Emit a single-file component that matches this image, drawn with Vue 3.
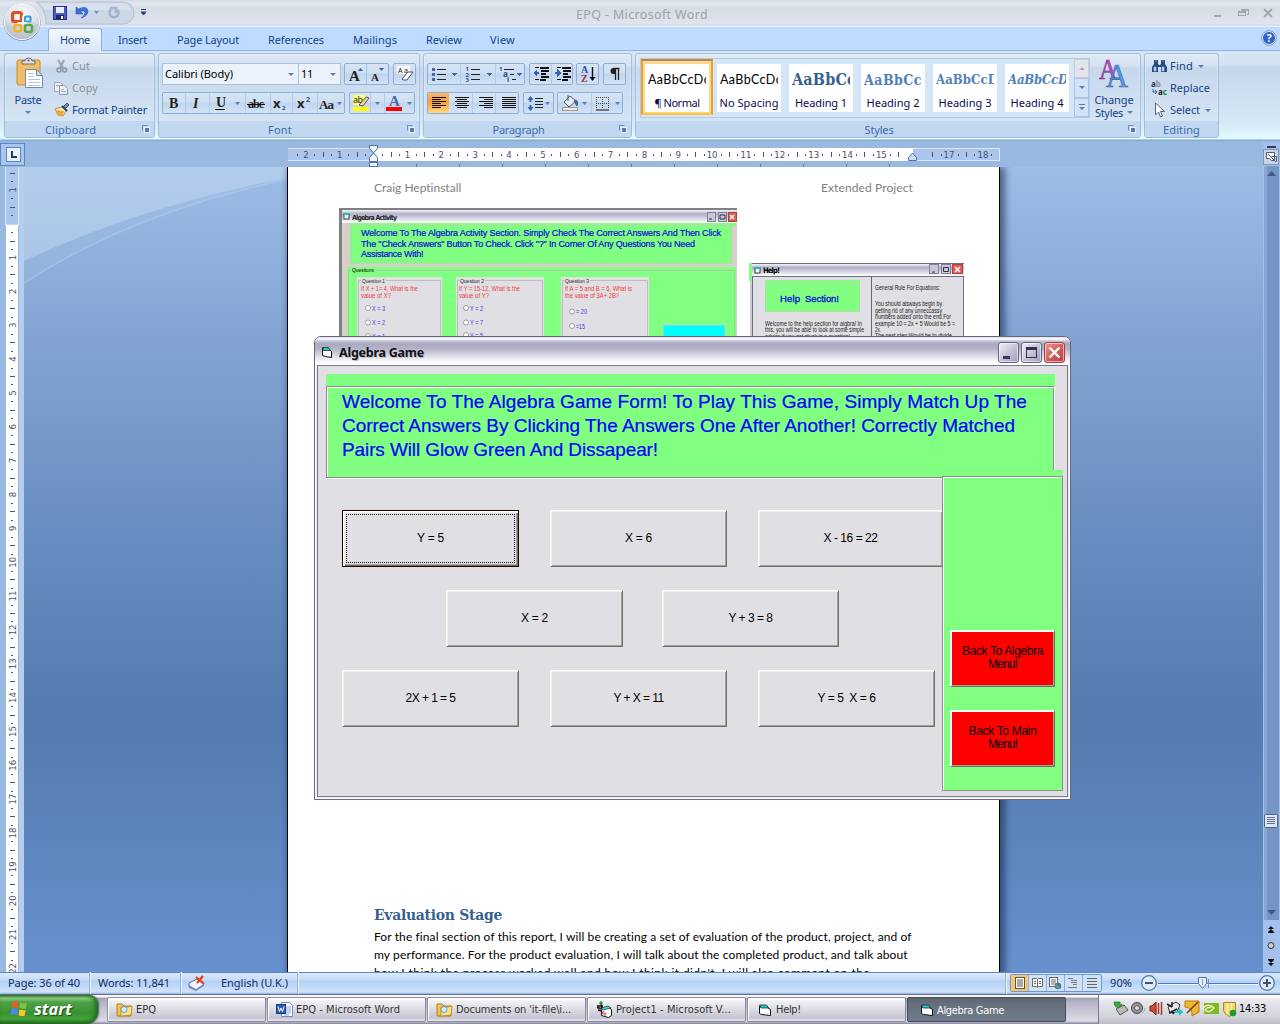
<script setup>
const vFit = {
  mounted(el, { value }) {
    const width = el.getBoundingClientRect().width
    el.style.letterSpacing = (value - width) / el.textContent.length + 'px'
  },
}

const tabs = [
  { label: 'Insert', left: 118, w: 29 },
  { label: 'Page Layout', left: 177, w: 62 },
  { label: 'References', left: 268, w: 56 },
  { label: 'Mailings', left: 353, w: 44 },
  { label: 'Review', left: 426, w: 36 },
  { label: 'View', left: 490, w: 25 },
].map((t, i, all) => ({ ...t, gap: t.left - (i ? all[i - 1].left + all[i - 1].w : 102) }))

const styles = [
  { sample: 'AaBbCcDc', name: '¶ Normal', cls: 'plain', w: 62, nw: 45 },
  { sample: 'AaBbCcDc', name: 'No Spacing', cls: 'plain', w: 62, nw: 59 },
  { sample: 'AaBbCc', name: 'Heading 1', cls: 'h1', w: 64, nw: 52 },
  { sample: 'AaBbCc', name: 'Heading 2', cls: 'h2', w: 58, nw: 53 },
  { sample: 'AaBbCcD', name: 'Heading 3', cls: 'h3', w: 62, nw: 53 },
  { sample: 'AaBbCcD', name: 'Heading 4', cls: 'h4', w: 60, nw: 53 },
]

const step = 33.85
const hTicks = []
for (let q = -9; q <= 73; q++) {
  const x = 85.6 + (q * step) / 4
  if (x < 1 || x > 708 || q === 0 || q === 64 || q === 63 || q === 65) continue
  hTicks.push({ x, q, n: q % 4 === 0 ? Math.abs(q / 4) : null, half: Math.abs(q % 4) === 2 })
}
const vTicks = []
for (let q = -6; q <= 88; q++) {
  if (q === 0) continue
  vTicks.push({ y: 56.7 + (q * step) / 4, q, n: q % 4 === 0 ? Math.abs(q / 4) : null, half: Math.abs(q % 4) === 2 })
}

const rows = [
  [{ t: 'Y = 5', w: 27, focus: true }, { t: 'X = 6', w: 27 }, { t: 'X - 16 = 22', w: 54, wide: true }],
  [{ t: 'X = 2', w: 27 }, { t: 'Y + 3 = 8', w: 44 }],
  [{ t: '2X + 1 = 5', w: 50 }, { t: 'Y + X = 11', w: 50 }, { t: 'Y = 5  X = 6', w: 58 }],
]

const tasks = [
  { t: 'EPQ', w: 20, icon: 'folder' },
  { t: 'EPQ - Microsoft Word', w: 104, icon: 'word' },
  { t: "Documents on 'it-file\\i...", w: 115, icon: 'folder' },
  { t: 'Project1 - Microsoft V...', w: 115, icon: 'project' },
  { t: 'Help!', w: 25, icon: 'form' },
  { t: 'Algebra Game', w: 67, icon: 'form', on: true },
]
</script>

<template>
  <div class="screen">
    <header class="titlebar">
      <svg class="quick" width="160" height="27">
        <path d="M38 2H123a11 11 0 0 1 0 22H46C46 14 43 7 36 2Z" fill="#cbd7e6" stroke="#b3c1d3" />
        <path d="M40 3H122a10 10 0 0 1 9 7H45Z" fill="#dce4ee" opacity=".7" />
        <g shape-rendering="crispEdges">
          <rect x="53.5" y="6.500" width="13" height="13" fill="#4a5bd0" stroke="#2c2f8c" />
          <rect x="56" y="7" width="8" height="6" fill="#e8f0fb" />
          <rect x="56" y="15" width="8" height="4" fill="#1f2a50" /><rect x="61" y="16" width="2" height="3" fill="#fff" />
        </g>
        <path d="M76 7v7h7l-2.500-2.500q4-2 4.500 1 0 3-4 5.500 7-2 7-7-1-6-9.500-2Z" fill="#3e72d8" stroke="#2450b0" stroke-width=".6" />
        <path d="M94 11h5l-2.500 3Z" fill="#6a8dc4" />
        <path d="M111 9.500a4.500 4.500 0 1 0 6 0M110 8h6v5" fill="none" stroke="#a3b3cc" stroke-width="2.500" />
        <path d="M141 9.500h5M141 12h5l-2.500 3Z" fill="#27417a" stroke="#27417a" stroke-width="1" />
      </svg>
      <span class="caption" v-fit="132">EPQ - Microsoft Word</span>
      <svg class="winctl" width="64" height="27" shape-rendering="crispEdges">
        <rect x="0" y="15" width="7" height="2" fill="#a3a7ad" />
        <g fill="none" stroke="#a3a7ad"><path d="M27.500 10V9.500h7v5h-2" /><rect x="24.500" y="11.500" width="7" height="4" /><path d="M25 12.500h7M28 10.500h6" /></g>
        <path d="M50 9l8 8M58 9l-8 8" stroke="#a3a7ad" stroke-width="2" shape-rendering="auto" />
      </svg>
    </header>

    <nav class="tabs">
      <div class="tab-on"><span v-fit="30">Home</span></div>
      <div v-for="t in tabs" :key="t.label" class="tab" :style="{ marginLeft: t.gap + 'px' }"><span v-fit="t.w">{{ t.label }}</span></div>
      <svg class="helpbtn" width="16" height="16"><circle cx="8" cy="8" r="6.500" fill="#2e62cf" stroke="#f4f8ff" /><circle cx="8" cy="8" r="7.300" fill="none" stroke="#5071a6" stroke-width=".6" /><text x="8" y="12" text-anchor="middle" fill="#fff" font-size="11" font-weight="bold" font-family="Noto Sans">?</text></svg>
    </nav>

    <svg class="orb" width="42" height="42">
      <defs>
        <radialGradient id="orbg" cx=".5" cy=".3" r=".75"><stop offset="0" stop-color="#fff" /><stop offset=".55" stop-color="#dde2ea" /><stop offset="1" stop-color="#a9b4c4" /></radialGradient>
      </defs>
      <circle cx="20" cy="20.500" r="18.500" fill="#7c8ba3" />
      <circle cx="20" cy="20" r="17.600" fill="url(#orbg)" stroke="#f5f8fc" stroke-width="1.200" />
      <path d="M3 22q17-6 34 0a17 15 0 0 1-34 0" fill="#b8c4d6" opacity=".45" />
      <g fill="none">
        <rect x="10.500" y="10.500" width="9" height="9" rx="2" stroke="#e0521c" stroke-width="3.200" />
        <rect x="23" y="14.500" width="5.500" height="5" rx="1" stroke="#3d9cdc" stroke-width="2.200" />
        <rect x="12.500" y="23" width="6.500" height="6.500" rx="2" stroke="#f6b21a" stroke-width="2.600" />
        <rect x="23" y="23" width="7" height="7" rx="2" stroke="#5fa843" stroke-width="2.600" />
      </g>
      <path d="M20 13.500h2v9h-2ZM15.500 20h10v2h-10Z" fill="#eceff4" />
    </svg>

    <section class="ribbon">
      <div class="group clip">
        <div class="body">
          <div class="paste">
            <svg width="30" height="33">
              <rect x="2" y="3" width="23" height="25" rx="2" fill="#f1bd62" stroke="#c88a32" />
              <path d="M7 7h13V4h-3q0-3-3.500-3T10 4H7Z" fill="#dfe0e2" stroke="#6d6d70" /><circle cx="13.500" cy="3.500" r="1" fill="#555" />
              <path d="M10.500 12.500h11l6 6v12h-17Z" fill="#fff" stroke="#7088b4" />
              <path d="M21.500 12.500v6h6Z" fill="#cddaf0" stroke="#7088b4" />
              <path d="M13 16.500h6M13 19.500h6M13 22.500h12M13 25.500h12M13 28.500h12" stroke="#b6c4dd" />
            </svg>
            <span class="cmd" v-fit="27">Paste</span>
            <i class="tri"></i>
          </div>
          <div class="list">
            <div class="item off"><svg width="18" height="16"><path d="M4 2l5 8M10 2L6 10" stroke="#9aa3b3" stroke-width="2" fill="none" /><circle cx="5" cy="12" r="2" fill="none" stroke="#8b97ad" stroke-width="1.500" /><circle cx="10.500" cy="12" r="2" fill="none" stroke="#8b97ad" stroke-width="1.500" /></svg><span v-fit="18">Cut</span></div>
            <div class="item off"><svg width="18" height="16"><path d="M.5 2.500h6l3 3v6h-9Z" fill="#eef1f6" stroke="#9ea8b9" /><path d="M5.500 5.500h5l3 3v6h-8Z" fill="#eef1f6" stroke="#8f9aad" /><path d="M2 5.500h3M7 9.500h3M7 11.500h5" stroke="#9ea8b9" /></svg><span v-fit="26">Copy</span></div>
            <div class="item"><svg width="18" height="16"><path d="M9 5l4-4 2 2-4 4Z" fill="#7d8bb5" stroke="#3c4a7c" /><path d="M1 7l7-2 4 4-3 5-5-1Z" fill="#fff1c0" stroke="#b58f3c" /><path d="M2 8l8 1-1 5-5-1Z" fill="#f0a53a" /><path d="M8 4l5 5" stroke="#333f66" stroke-width="2" /></svg><span v-fit="75">Format Painter</span></div>
          </div>
        </div>
        <div class="label"><span v-fit="51">Clipboard</span><i class="launch"></i></div>
      </div>

      <div class="group font">
        <div class="body rows">
          <div class="row">
            <div class="combo c1"><span v-fit="68">Calibri (Body)</span><i class="tri"></i></div>
            <div class="combo c2"><span v-fit="12">11</span><i class="tri"></i></div>
            <div class="btns g3">
              <svg width="43" height="21"><path d="M21.500 0v21" stroke="#a9c3e6" /><text x="4" y="17" font-size="15" font-weight="bold" textLength="12">A</text><path d="M13 7l2.500-3 2.500 3Z" fill="#2c5fa8" /><text x="26" y="17" font-size="11" font-weight="bold" textLength="8">A</text><path d="M34 4h5l-2.500 3Z" fill="#2c5fa8" /></svg>
            </div>
            <div class="btns g4">
              <svg width="21" height="21"><rect x="3" y="2" width="13" height="8" fill="#f8f8f8" /><text x="4" y="9" font-size="7" font-family="Noto Sans" textLength="10">Aa</text><path d="M8 15l6-7h5l-6 8H9Z" fill="#fff" stroke="#4c5668" /></svg>
            </div>
          </div>
          <div class="row">
            <div class="btns">
              <svg width="181" height="21">
                <path d="M22.500 0v21M46.500 0v21M82.500 0v21M107.500 0v21M129.500 0v21M154.500 0v21" stroke="#b4cae8" />
                <g font-weight="bold"><text x="6" y="15" font-size="14" textLength="9">B</text><text x="30" y="15" font-size="14" font-style="italic" textLength="6">I</text><text x="53" y="14" font-size="14" textLength="9">U</text><path d="M52 16.500h10" stroke="#111" /><text x="85" y="15" font-size="12" textLength="16">abc</text><path d="M84 11.500h18" stroke="#111" />
                  <g font-family="Noto Sans"><text x="110" y="15" font-size="13">x</text><text x="119" y="17" font-size="6" class="bl">2</text><text x="134" y="15" font-size="13">x</text><text x="143" y="9" font-size="7" class="bl">2</text></g>
                  <text x="156" y="16" font-size="13" textLength="15">Aa</text></g>
                <path d="M72 9h5l-2.500 3ZM174 9h5l-2.500 3Z" fill="#5b7fb5" />
              </svg>
            </div>
            <div class="btns g4">
              <svg width="64" height="21"><path d="M20.500 0v21M34.500 0v21" stroke="#b4cae8" /><rect x="3" y="2" width="12" height="10" fill="#ffff80" /><text x="3" y="10" font-size="9" font-family="Noto Sans" textLength="10">ab</text><path d="M9 12l7-8 3 1-6 8Z" fill="#e9dfa0" stroke="#555" /><rect x="3" y="14" width="16" height="4" fill="#ff0" /><text x="39" y="13" font-size="15" font-weight="bold" class="slate" textLength="11">A</text><rect x="36" y="14" width="16" height="4" fill="#f00" /><path d="M25 9h5l-2.500 3ZM57 9h5l-2.500 3Z" fill="#5b7fb5" /></svg>
            </div>
          </div>
        </div>
        <div class="label"><span v-fit="24">Font</span><i class="launch"></i></div>
      </div>

      <div class="group para">
        <div class="body rows">
          <div class="row">
            <div class="btns">
              <svg width="96" height="21" shape-rendering="crispEdges"><path d="M32.500 0v21M67.500 0v21" stroke="#b4cae8" />
                <path d="M9 5.500h9M9 10.500h9M9 15.500h9M43 5.500h9M43 10.500h9M43 15.500h9M76 5.500h10M82 10.500h4M84 15.500h4" stroke="#222" />
                <g fill="#3d66ad"><rect x="4" y="4" width="3" height="3" /><rect x="4" y="9" width="3" height="3" /><rect x="4" y="14" width="3" height="3" /><path d="M24 9h5l-2.500 3ZM59 9h5l-2.500 3ZM89 9h5l-2.500 3Z" /></g>
                <g font-size="6" font-family="Noto Sans" font-weight="bold"><text x="37.500" y="7" class="bl">1</text><text x="37.500" y="12.500" class="bl">2</text><text x="37.500" y="18" class="bl">3</text><text x="71" y="7" class="bl">1</text><text x="75" y="13" font-size="8" class="bl">a</text><text x="79" y="18" font-size="7" class="bl">i</text></g></svg>
            </div>
            <div class="btns g4"><svg width="42" height="21" shape-rendering="crispEdges"><path d="M21.500 0v21" stroke="#b4cae8" /><path d="M10 3.500h9M11 6.500h8M11 9.500h5M11 12.500h8M10 15.500h6M32 3.500h9M33 6.500h8M33 9.500h5M33 12.500h8M32 15.500h6" stroke="#111" stroke-width="2" /><path d="M5 3.500h4M5 15.500h4M27 3.500h4M27 15.500h4" stroke="#111" /><path d="M3 9l4-4v8ZM31 9l-4-4v8Z" fill="#3465b5" /><path d="M5 9h4M25 9h3" stroke="#3465b5" stroke-width="2" /></svg></div>
            <div class="btns g4"><svg width="21" height="21"><text x="4" y="9" font-size="10" font-weight="bold" class="bl" textLength="6">A</text><text x="4" y="18" font-size="10" font-weight="bold" class="rd" textLength="6">Z</text><path d="M15.500 3v11" stroke="#111" stroke-width="1.400" /><path d="M12.500 13h6l-3 4Z" fill="#111" /></svg></div>
            <div class="btns g4"><svg width="21" height="21"><path d="M15.500 4.500H9.500M11.500 4v12M14.500 4v12" fill="none" stroke="#222" stroke-width="1.300" /><path d="M12 4H9.500a3 3 0 0 0 0 6H12Z" fill="#222" /></svg></div>
          </div>
          <div class="row">
            <div class="btns"><svg width="90" height="21" shape-rendering="crispEdges"><defs><linearGradient id="og" x2="0" y2="1"><stop offset="0" stop-color="#f9b667" /><stop offset=".45" stop-color="#f99e3c" /><stop offset="1" stop-color="#ffe08a" /></linearGradient></defs><rect width="21" height="21" fill="url(#og)" /><path d="M44.500 0v21M67.500 0v21" stroke="#b4cae8" />
              <path d="M4 4.500h14M4 6.500h9M4 8.500h14M4 10.500h9M4 12.500h14M4 14.500h9M27 4.500h14M29 6.500h10M27 8.500h14M29 10.500h10M27 12.500h14M29 14.500h10M51 4.500h14M56 6.500h9M51 8.500h14M56 10.500h9M51 12.500h14M56 14.500h9M74 4.500h14M74 6.500h14M74 8.500h14M74 10.500h14M74 12.500h14M74 14.500h14" stroke="#111" /></svg></div>
            <div class="btns g4"><svg width="29" height="21"><path d="M6.500 4v5M6.500 12v5" stroke="#3465b5" stroke-width="2" /><path d="M3.500 7l3-4 3 4ZM3.500 14h6l-3 4Z" fill="#3465b5" /><path d="M11 5.500h8M11 8.500h8M11 11.500h8M11 14.500h8" stroke="#222" /><path d="M21 9h5l-2.500 3Z" fill="#5b7fb5" /></svg></div>
            <div class="btns g4"><svg width="64" height="21"><path d="M33.500 0v21" stroke="#b4cae8" /><path d="M6 9l6-6 6 5-7 6Z" fill="#e9eef5" stroke="#4a5d80" /><path d="M10 2v6M18 7q3 2 1 6l-3-5Z" stroke="#3d5c96" fill="#3d6bb0" /><rect x="4.500" y="14.500" width="15" height="3" fill="#f3ead8" stroke="#999" /><path d="M24 9h5l-2.500 3ZM57 9h5l-2.500 3Z" fill="#5b7fb5" /><g stroke="#444" stroke-dasharray="1 1"><path d="M38 4.500h13M38 10.500h13M38.500 4v12M44.500 4v12M50.500 4v12" /></g><path d="M38 17h13" stroke="#111" /></svg></div>
          </div>
        </div>
        <div class="label"><span v-fit="52">Paragraph</span><i class="launch"></i></div>
      </div>

      <div class="group styles">
        <div class="body">
          <div class="gallery">
            <div v-for="(s, i) in styles" :key="i" class="cell" :class="{ sel: i === 0 }">
              <div class="card"><div class="sample" :class="s.cls"><span v-fit="s.w">{{ s.sample }}</span></div><div class="sname"><span v-fit="s.nw">{{ s.name }}</span></div></div>
            </div>
            <div class="gscroll"><div class="gs dis"><b class="up"></b></div><div class="gs"><i class="tri"></i></div><div class="gs more"><i class="tri"></i></div></div>
          </div>
          <div class="change">
            <svg width="34" height="32"><g font-family="Liberation Serif"><text x="2" y="22" font-size="30" fill="#b84fc0" stroke="#7c2a86" stroke-width=".6" textLength="18" lengthAdjust="spacingAndGlyphs">A</text><text x="9" y="30" font-size="34" fill="#5d95e0" stroke="#2f62ae" stroke-width=".6" textLength="22" lengthAdjust="spacingAndGlyphs">A</text></g></svg>
            <span class="cmd" v-fit="39">Change</span>
            <span class="cmd2"><span v-fit="28">Styles</span><i class="tri"></i></span>
          </div>
        </div>
        <div class="label"><span v-fit="29">Styles</span><i class="launch"></i></div>
      </div>

      <div class="group editing">
        <div class="body">
          <div class="list">
            <div class="item"><svg width="19" height="16"><path d="M3 2h4v4l1 1h1l1-1V2h4v4l2 3v5h-6V9H7v5H1V9l2-3Z" fill="#2a4a86" /><path d="M3 9h2v4H3ZM11 9h2v4h-2ZM4 3h2M11 3h2" fill="#b9cdf0" stroke="#b9cdf0" stroke-width=".5" /></svg><span v-fit="23">Find</span><i class="tri"></i></div>
            <div class="item"><svg width="19" height="16"><g font-family="Noto Sans" font-size="8" font-weight="bold"><text x="0" y="6.500" fill="#333">a<tspan fill="#8a94a4">b</tspan></text><text x="7" y="14.500" fill="#222">a<tspan fill="#1a8a1a">c</tspan></text></g><path d="M2 9v3h4M4 10l2 2-2 2" stroke="#2c5fa8" fill="none" /></svg><span v-fit="40">Replace</span></div>
            <div class="item"><svg width="19" height="16"><path d="M4.500 1v12l3-3 2 5 2-1-2-4.500h4Z" fill="#fff" stroke="#56657f" /></svg><span v-fit="30">Select</span><i class="tri"></i></div>
          </div>
        </div>
        <div class="label"><span v-fit="37">Editing</span></div>
      </div>
    </section>

    <main class="work">
      <aside class="left">
        <div class="tabsel"><svg width="15" height="15"><rect x=".5" y=".5" width="14" height="14" fill="#e9f1fb" stroke="#5c86cc" /><path d="M6 4v6h5" fill="none" stroke="#203c66" stroke-width="2" /></svg></div>
        <svg class="vruler" width="24" height="805">
          <rect width="24" height="805" fill="#9ab9e1" /><rect x="19" width="5" height="805" fill="#b7cdee" />
          <rect x="5" y="0" width="14" height="58" fill="#abc6ec" /><rect x="5.500" y="-1" width="13" height="59" fill="none" stroke="#dce8f7" /><rect x="6" y="58" width="12" height="747" fill="#fff" />
          <template v-for="k in vTicks" :key="k.q">
            <text v-if="k.n" class="rn" :transform="`translate(16 ${k.y}) rotate(-90)`" text-anchor="middle">{{ k.n }}</text>
            <rect v-else-if="k.half" x="10" :y="Math.round(k.y)" width="5" height="1" fill="#4c5566" />
            <rect v-else x="11" :y="Math.round(k.y)" width="2" height="1" fill="#4c5566" />
          </template>
        </svg>
      </aside>

      <div class="center">
        <svg class="hruler" width="713" height="25">
          <rect x="0" y="6" width="712" height="13" fill="#dce8f7" /><rect x="0" y="7" width="711" height="11" fill="#abc6ec" /><rect x="86" y="6" width="539" height="13" fill="#fff" />
          <template v-for="k in hTicks" :key="k.q">
            <text v-if="k.n" class="rn" :x="k.x" y="16" text-anchor="middle">{{ k.n }}</text>
            <rect v-else-if="k.half" :x="Math.round(k.x)" y="10" width="1" height="5" fill="#4c5566" />
            <rect v-else :x="Math.round(k.x)" y="12" width="1" height="2" fill="#4c5566" />
          </template>
          <rect v-for="n in 12" :key="n" :x="85 + n * 43" y="22" width="1" height="3" fill="#6f7a8a" />
          <g fill="#f2f7fd" stroke="#4d73b4"><path d="M81.500 3.500h8v3l-4 4.500-4-4.500ZM81.500 19.500v-4l4-4.500 4 4.500v4Z" /><rect x="81.500" y="20.500" width="8" height="4" /><path d="M620.500 18.500v-3l4-4.500 4 4.500v3Z" fill="#c9dcf4" /></g>
        </svg>
        <div class="desk">
          <svg class="swoosh" width="264" height="130">
            <path d="M0 0H264V11Q120 38 0 94Z" fill="#cfe1f5" opacity=".45" />
            <path d="M0 116Q110 45 264 12" fill="none" stroke="#b6cff0" stroke-width="1.500" opacity=".5" />
            <path d="M0 94Q120 38 264 11Q110 45 0 116Z" fill="#cfe1f5" opacity=".1" />
          </svg>
          <article class="page">
            <div class="phead"><span v-fit="87.500">Craig Heptinstall</span><span v-fit="92">Extended Project</span></div>
            <div class="shots">
              <svg class="s1" width="399" height="140" viewBox="339 208 399 140">
                <defs><linearGradient id="tb" x2="0" y2="1"><stop offset="0" stop-color="#f4f4f8" /><stop offset=".3" stop-color="#b0b0c8" /><stop offset="1" stop-color="#fff" /></linearGradient></defs>
                <rect x="339" y="208" width="398" height="140" fill="#808080" /><rect x="342" y="210" width="395" height="13" fill="url(#tb)" /><rect x="342" y="223" width="395" height="125" fill="#d6d0c8" />
                <rect x="344" y="214" width="5" height="5" fill="#fff" stroke="#333" /><rect x="344" y="213" width="5" height="2" fill="#0cc" />
                <text x="352" y="220" font-size="7" font-weight="bold" class="nar" textLength="45" fill="#222">Algebra Activity</text>
                <g><rect x="707.500" y="212.500" width="8" height="9" fill="#c8c8da" stroke="#8080a0" /><rect x="718.500" y="212.500" width="8" height="9" fill="#c8c8da" stroke="#8080a0" /><rect x="728.500" y="212.500" width="8" height="9" fill="#d9605c" stroke="#b04040" /><path d="M709 219h3M720 215h5v4h-5Z" stroke="#333" fill="none" /><path d="M730 215l4 4m0-4l-4 4" stroke="#fff" stroke-width="1.300" /></g>
                <rect x="350" y="223" width="386" height="41" fill="#80ff80" /><rect x="732" y="226" width="4" height="38" fill="#d6d0c8" /><rect x="351.500" y="225.500" width="380" height="37" fill="none" stroke="#b4d8ac" />
                <g class="blue" font-size="9" stroke="#0a0ad8" stroke-width=".2"><text x="361" y="235.500" textLength="360">Welcome To The Algebra Activity Section. Simply Check The Correct Answers And Then Click</text><text x="361" y="246.500" textLength="334">The "Check Answers" Button To Check. Click "?" In Corner Of Any Questions You Need</text><text x="361" y="257.300" textLength="62.500">Assistance With!</text></g>
                <rect x="347" y="267" width="389" height="81" fill="#80ff80" /><path d="M348.500 348V270.500H351M376 270.500H734.500V348" fill="none" stroke="#a8c8a0" />
                <text x="352" y="272" font-size="5.800" textLength="22" lengthAdjust="spacingAndGlyphs">Questions</text>
                <g fill="#e0dfe3"><rect x="357" y="277" width="85" height="70" /><rect x="456" y="277" width="88" height="70" /><rect x="561" y="277" width="88" height="70" /></g>
                <g fill="none" stroke="#bdbdc4"><path d="M358.500 347V280.500H361M386 280.500H440.500V347M457.500 347V280.500H460M485 280.500H542.500V347M562.500 347V280.500H565M590 280.500H647.500V347" /></g>
                <g font-size="5.800" fill="#222"><text x="362" y="283" textLength="23" lengthAdjust="spacingAndGlyphs">Question 1</text><text x="460" y="283" textLength="24" lengthAdjust="spacingAndGlyphs">Question 2</text><text x="565" y="283" textLength="24" lengthAdjust="spacingAndGlyphs">Question 3</text></g>
                <g font-size="6.300" class="red"><text x="361" y="291" textLength="57" lengthAdjust="spacingAndGlyphs">If X + 1= 4, What is the</text><text x="361" y="298" textLength="30" lengthAdjust="spacingAndGlyphs">value of X?</text><text x="459" y="291" textLength="61" lengthAdjust="spacingAndGlyphs">If Y = 15-12, What is the</text><text x="459" y="298" textLength="30" lengthAdjust="spacingAndGlyphs">value of Y?</text><text x="565" y="291" textLength="67" lengthAdjust="spacingAndGlyphs">If A = 5  and B = 6, What is</text><text x="565" y="298" textLength="54" lengthAdjust="spacingAndGlyphs">the value of 3A+ 2B?</text></g>
                <g font-size="6.300" class="blue2"><text x="372" y="310.500" textLength="13" lengthAdjust="spacingAndGlyphs">X = 3</text><text x="372" y="325" textLength="13" lengthAdjust="spacingAndGlyphs">X = 2</text><text x="372" y="339" textLength="13" lengthAdjust="spacingAndGlyphs">X = 1</text><text x="470" y="310.500" textLength="13" lengthAdjust="spacingAndGlyphs">Y = 2</text><text x="470" y="325" textLength="13" lengthAdjust="spacingAndGlyphs">Y = 7</text><text x="470" y="337.500" textLength="13" lengthAdjust="spacingAndGlyphs">Y = 5</text><text x="576" y="314" textLength="11" lengthAdjust="spacingAndGlyphs">= 20</text><text x="576" y="328.500" textLength="9" lengthAdjust="spacingAndGlyphs">=15</text></g>
                <g fill="#fff" stroke="#888" stroke-width=".8"><circle cx="368" cy="308" r="2.500" /><circle cx="368" cy="322.500" r="2.500" /><circle cx="368" cy="336" r="2.500" /><circle cx="466" cy="308" r="2.500" /><circle cx="466" cy="322.500" r="2.500" /><circle cx="466" cy="335" r="2.500" /><circle cx="572" cy="311.500" r="2.500" /><circle cx="572" cy="326" r="2.500" /></g>
                <rect x="663" y="325" width="62" height="20" fill="#0ff" stroke="#bcd" />
              </svg>
              <svg class="s2" width="216" height="85" viewBox="749 263 216 85">
                <rect x="749" y="263" width="3" height="18" fill="#80ff80" /><rect x="750" y="281" width="2" height="67" fill="#ccc" />
                <rect x="752" y="263" width="212" height="85" fill="#6e6e86" /><rect x="752" y="264" width="212" height="12" fill="url(#tb)" /><rect x="753" y="277" width="210" height="71" fill="#e0dfe3" />
                <rect x="755" y="268" width="5" height="5" fill="#fff" stroke="#333" /><rect x="755" y="267" width="5" height="2" fill="#0cc" />
                <text x="763" y="273" font-size="7.500" font-weight="bold" class="nar" textLength="17">Help!</text>
                <rect x="929.500" y="264.500" width="9" height="9" fill="#c8c8da" stroke="#8080a0" /><rect x="941.500" y="264.500" width="9" height="9" fill="#c8c8da" stroke="#8080a0" /><rect x="952.500" y="264.500" width="10" height="9" fill="#d9605c" stroke="#b04040" /><path d="M932 272h3M943.500 267.500h5v4h-5Z" stroke="#333" fill="none" /><path d="M955 267l5 5m0-5l-5 5" stroke="#fff" stroke-width="1.300" />
                <rect x="765" y="280" width="95" height="32" fill="#80ff80" /><rect x="765.500" y="283.500" width="94" height="28" fill="none" stroke="#b4d8ac" />
                <g font-size="9.500" class="blue" stroke="#0a0ad8" stroke-width=".3"><text x="780" y="301.500" textLength="20">Help</text><text x="805" y="301.500" textLength="34">Section!</text></g>
                <path d="M871.500 276v72" stroke="#666" />
                <g font-size="6.300" fill="#222"><text x="765" y="325.500" textLength="97" lengthAdjust="spacingAndGlyphs">Welcome to the help section for algbra! In</text><text x="765" y="332" textLength="99" lengthAdjust="spacingAndGlyphs">this, you will be able to look at some simple</text><text x="765" y="338.500" textLength="85" lengthAdjust="spacingAndGlyphs">advice if you get stuck in a question!</text>
                  <text x="875" y="290" textLength="65" lengthAdjust="spacingAndGlyphs">General Rule For Equations:</text><text x="875" y="306" textLength="67" lengthAdjust="spacingAndGlyphs">You should alsways begin by</text><text x="875" y="312.500" textLength="67" lengthAdjust="spacingAndGlyphs">getting rid of any unneccassy</text><text x="875" y="319" textLength="76" lengthAdjust="spacingAndGlyphs">numbers added onto the end.For</text><text x="875" y="325.500" textLength="80" lengthAdjust="spacingAndGlyphs">example 10 = 2x + 5 Would be 5 =</text><text x="875" y="332" textLength="6" lengthAdjust="spacingAndGlyphs">2x.</text><text x="875" y="338" textLength="77" lengthAdjust="spacingAndGlyphs">The next step Would be to divide</text></g>
              </svg>
            </div>
            <h2><span v-fit="128">Evaluation Stage</span></h2>
            <p><span v-fit="538">For the final section of this report, I will be creating a set of evaluation of the product, project, and of</span></p>
            <p><span v-fit="534">my performance. For the product evaluation, I will talk about the completed product, and talk about</span></p>
            <p><span v-fit="496">how I think the process worked well and how I think it didn't. I will also comment on the</span></p>
          </article>
        </div>
      </div>

      <aside class="right">
        <svg width="17" height="830">
          <rect width="17" height="830" fill="#a3c1ec" /><rect x="1" y="24" width="15" height="754" fill="#7596c4" /><rect x="1" y="24" width="3" height="754" fill="#88a6d0" />
          <rect x="4" y="4" width="9" height="2" fill="#2f3f5e" />
          <rect x=".5" y="7.500" width="15" height="15" fill="#c9d3e2" stroke="#8296b4" /><path d="M3.500 10.500h8v8h-3l-2-2h-3Z" fill="#fff" stroke="#4a5d80" /><path d="M5 12l8 8M8.500 14.500h5v5" stroke="#4a5d80" fill="none" />
          <path d="M4 34h9l-4.500-5Z" fill="#3f5886" /><path d="M4 768h9l-4.500 5Z" fill="#3f5886" />
          <rect x="1.500" y="672.500" width="13" height="13" rx="1" fill="#dfe7f2" stroke="#4d6694" /><path d="M4 675.500h8M4 677.500h8M4 679.500h8M4 681.500h8" stroke="#5f7296" />
          <g fill="#111"><path d="M5 787h6l-3-3ZM5 790h6l-3-3Z" /><rect x="5" y="790" width="6" height="1" /><path d="M5 818h6l-3 3ZM5 821h6l-3 3Z" /><rect x="5" y="817" width="6" height="1" /></g><circle cx="8" cy="803.500" r="3" fill="#ccc" stroke="#333" />
        </svg>
      </aside>
    </main>

    <footer class="status">
      <div class="st s-page"><span v-fit="72">Page: 36 of 40</span></div>
      <div class="st s-words"><span v-fit="72">Words: 11,841</span></div>
      <div class="st s-lang">
        <svg width="18" height="18"><path d="M1 9l8-4 7 5-8 6-7-3Z" fill="#f3f6fb" stroke="#5f7396" /><path d="M1 11l7 4 8-5v2l-8 5-7-3Z" fill="#7590c0" /><path d="M8 3l8 7M15 2L9 9" stroke="#e23b1e" stroke-width="2.200" /></svg>
        <span v-fit="67">English (U.K.)</span>
      </div>
      <svg class="stright" width="276" height="22">
        <path d="M1.500 1v21" stroke="#8eb4e6" /><path d="M2.500 1v21" stroke="#f0f6fe" />
        <rect x="6.500" y="2.500" width="91" height="17" rx="1" fill="#cfe1f7" stroke="#6f95cc" /><rect x="7" y="3" width="17" height="16" fill="#fbc66a" />
        <path d="M24.500 3v16M42.500 3v16M60.500 3v16M78.500 3v16" stroke="#8fb0dd" />
        <rect x="11.500" y="5.500" width="9" height="11" fill="#fff" stroke="#555" /><path d="M13 8h6M13 10h6M13 12h6M13 14h6" stroke="#555" />
        <path d="M28.500 6.500h4l1 1 1-1h4v8h-4l-1 1-1-1h-4ZM33.500 7v8M30 9.500h2M30 11.500h2M35 9.500h2M35 11.500h2" fill="#fff" stroke="#666" />
        <rect x="45.500" y="5.500" width="8" height="9" fill="#fff" stroke="#666" /><path d="M47 8h5M47 10h5M47 12h5" stroke="#666" /><circle cx="54" cy="14" r="3.300" fill="#4577b8" /><path d="M52 13l3 3" stroke="#5dab4e" stroke-width="2" />
        <path d="M64 6.500h5M67 8.500h6M67 10.500h6M69 12.500h4M64 15.500h9" stroke="#777" /><path d="M83 6.500h10M83 9.500h10M83 12.500h10M83 15.500h10" stroke="#666" />
        <text x="106" y="15" font-size="11" textLength="22" class="pct">90%</text>
        <path d="M154 11.500h100" stroke="#4f77b5" /><path d="M154 12.500h100" stroke="#f3f8ff" /><path d="M204.500 7v9" stroke="#6f8fc0" />
        <g fill="#dfebf9" stroke="#5576a8" stroke-width="1.300"><circle cx="145" cy="11" r="7.300" /><circle cx="263" cy="11" r="7.300" /></g><path d="M141 11h8M259 11h8M263 7v8" stroke="#41526f" stroke-width="2" />
        <path d="M194.500 5.500h8v6l-4 5-4-5Z" fill="#e7f0fb" stroke="#55749f" /><path d="M198.500 7v6" stroke="#7a9bcb" />
      </svg>
    </footer>

    <footer class="taskbar">
      <div class="start">
        <svg width="20" height="19"><g transform="rotate(4 10 9)"><path d="M2 4q3-2 6-.5V9Q5 8 1.500 9Z" fill="#ef5a2a" /><path d="M9.500 3.500q3 1.500 7-.5L16 9q-4 1-6.500 0Z" fill="#7dc242" /><path d="M1.500 10.500Q5 9 8 10.500L7.500 16Q5 15 1 16.500Z" fill="#4a8af0" /><path d="M9.500 10.500q3 1 6.500 0L15 16.500q-3 1-6-.5Z" fill="#fbc62a" /></g></svg>
        <span v-fit="38">start</span>
      </div>
      <div v-for="k in tasks" :key="k.t" class="task" :class="{ on: k.on }">
        <svg width="17" height="17">
          <g v-if="k.icon === 'folder'"><path d="M1 3h5l2 2h7v10H1Z" fill="#f6c445" stroke="#b27d12" /><path d="M5 6h7l4-1-1 9-10 1Z" fill="#ffe28a" stroke="#b27d12" stroke-width=".7" /><circle cx="8" cy="8.500" r="3" fill="#d5ecfb" stroke="#5aa0d0" /></g>
          <g v-else-if="k.icon === 'word'"><path d="M5.500 1.500h8l3 3v11h-11Z" fill="#fff" stroke="#6d8bc4" /><path d="M10 6h5M10 8h5M8 10h7M8 12h7M8 14h5" stroke="#87a4d8" /><rect x=".5" y="3.500" width="9" height="9" fill="#2d5db5" stroke="#173c87" /><path d="M2 5.500l1.500 5L5 7l1.500 3.500 1.500-5" fill="none" stroke="#fff" /></g>
          <g v-else-if="k.icon === 'project'"><path d="M5.500 8.500l6-3 4 3v6l-3 2-7-2Z" fill="#fff" stroke="#111" /><path d="M5 7l7-2 3 2-8 2Z" fill="#3dd" stroke="#111" stroke-width=".6" /><path d="M1 5h6M2 9l4 1M5 2l1 5M1 6.500l4 1" stroke="#111" stroke-width="1.500" /><circle cx="5" cy="2" r="1.700" fill="#2a9a3a" /><path d="M7 10v3M9 11.500v3" stroke="#e22" stroke-width="1.300" /></g>
          <g v-else><path d="M3.500 5.500l8 1 3 2v6l-9-1-2-1Z" fill="#fff" stroke="#111" /><path d="M3.500 4h7l2 3H5Z" fill="#2cc" stroke="#111" stroke-width=".7" /></g>
        </svg>
        <span v-fit="k.w">{{ k.t }}</span>
      </div>
      <div class="tray">
        <svg width="128" height="20">
          <path d="M2 3h6v3l2-1-2 5-5-3Z" fill="#3cae3c" stroke="#1a701a" stroke-width=".7" /><path d="M4 10l8-4 4 5-8 5Z" fill="#b9bdb5" stroke="#555" />
          <circle cx="25" cy="9" r="5.500" fill="#999" stroke="#444" /><circle cx="25" cy="9" r="2.500" fill="#ddd" stroke="#555" /><path d="M30 14q3-1 3-5" stroke="#9aa2dd" fill="none" />
          <path d="M38 7h2l4-4v13l-4-4h-2Z" fill="#d9482c" stroke="#7a1d10" /><path d="M46.500 4v11M49.500 3v13" stroke="#a63a28" stroke-width="1.500" />
          <path d="M56 8l8-5 4 3-3 7-7 1Z" fill="#e9e9e9" stroke="#333" /><path d="M55 5l5 3M60 3v5M57 14l8-4M59 12l3 3" stroke="#222" stroke-width="1.500" /><path d="M63 12h4v-3l4 4-4 4v-3h-4Z" fill="#1cc" />
          <path d="M73 2h14v11l-7 4q1-8-7-9Z" fill="#f3b52c" stroke="#b27a12" /><path d="M75 14L86 3" stroke="#5a4318" stroke-width="1.500" />
          <rect x="92" y="4" width="15" height="11" fill="#80b81e" /><path d="M90 10q6-7 12-1-5 6-9 2 3-4 6-2" fill="none" stroke="#e6f5c4" stroke-width="1.300" />
          <path d="M111.500 3.500h12v8q-1 4-6 6-5-2-6-6Z" fill="#f5d564" stroke="#a98a26" /><path d="M115.500 4v11M119.500 4v11" stroke="#fff6c8" stroke-width="1.500" /><circle cx="121" cy="14" r="3.300" fill="#1f9a2c" />
        </svg>
        <span v-fit="27">14:33</span>
      </div>
    </footer>

    <div class="window">
      <div class="wtitle">
        <svg width="14" height="14"><path d="M1.500 2.500l7 1 2 2v6l-6-1-3-1Z" fill="#fff" stroke="#111" /><path d="M1.500 1.500h6l2 3h-7Z" fill="#2cc" stroke="#111" stroke-width=".7" /></svg>
        <span class="wt" v-fit="85">Algebra Game</span>
        <div class="wb"><svg width="19" height="19"><path d="M4 14.500h7" stroke="#3a3a5c" stroke-width="3" /></svg></div>
        <div class="wb"><svg width="19" height="19" shape-rendering="crispEdges"><path d="M4.500 4.500h10v10h-10Z" fill="none" stroke="#33334f" /><path d="M4 5h11v2H4Z" fill="#33334f" /></svg></div>
        <div class="wb close"><svg width="19" height="19"><path d="M4.500 4.500l10 10M14.500 4.500l-10 10" stroke="#fff" stroke-width="2.400" /></svg></div>
      </div>
      <div class="client">
        <div class="main">
          <div class="banner"><div class="frame">
            <span v-fit="685">Welcome To The Algebra Game Form! To Play This Game, Simply Match Up The</span>
            <span v-fit="673">Correct Answers By Clicking The Answers One After Another! Correctly Matched</span>
            <span v-fit="316">Pairs Will Glow Green And Dissapear!</span>
          </div></div>
          <div v-for="(r, i) in rows" :key="i" class="brow" :class="'r' + i">
            <button v-for="b in r" :key="b.t" class="vb" :class="{ focus: b.focus, wide: b.wide }"><span v-fit="b.w">{{ b.t }}</span></button>
          </div>
        </div>
        <div class="side"><div class="sideframe">
          <button class="vb redb"><span v-fit="81">Back To Algebra</span><span v-fit="29">Menu!</span></button>
          <button class="vb redb"><span v-fit="68">Back To Main</span><span v-fit="29">Menu!</span></button>
        </div></div>
      </div>
    </div>
  </div>
</template>

<style>
html, body { margin: 0; overflow: hidden; }
</style>
<style scoped>
* { box-sizing: border-box; }
.screen { position: relative; width: 1280px; height: 1024px; overflow: hidden; display: flex; flex-direction: column; font: 11px/14px "Noto Sans", "Open Sans", sans-serif; color: #15428b; }
span { display: inline-block; white-space: pre; }
svg { display: block; flex: none; }
.titlebar { height: 27px; flex: none; display: flex; background: linear-gradient(#d3d9e1, #e3e8ee 3px, #d6dde7 9px, #dfe5ed 24px, #cdd5df 25px, #e8edf4 26px); }
.caption { margin: 6px 0 0 416px; font-size: 12.500px; line-height: 17px; height: 17px; color: #9fa1a4; }
.winctl { margin-left: 506px; }
.tabs { height: 24px; flex: none; display: flex; background: #bfdbff; border-bottom: 1px solid #8db2e3; line-height: 25px; }
.tab-on { margin: 1px 0 -1px 48px; width: 54px; height: 23px; background: linear-gradient(#f3f8fe, #dbe8f8); border: 1px solid #8db2e3; border-bottom: 0; border-radius: 3px 3px 0 0; padding-left: 11px; line-height: 22px; }
.helpbtn { margin: 3px 3px 0 auto; }
.orb { position: absolute; left: 2px; top: 2px; }
.ribbon { height: 91px; flex: none; display: flex; padding: 2px 0 0 4px; gap: 3px; background: linear-gradient(#dbe6f4, #d3e1f2 14px, #c6d7ec 16px, #d5e6f6 70px, #e3fbff 88px, #7fa6cd 89px, #9dbde0 91px); }
.group { height: 85px; display: flex; flex-direction: column; border: 1px solid #9fbddd; border-radius: 3px; background: linear-gradient(#dfe9f5, #d4e1f1 12px, #c7d8ed 14px, #d9e8f6); box-shadow: inset 0 0 0 1px rgba(255,255,255,.25); overflow: hidden; flex: none; }
.body { flex: 1; display: flex; min-height: 0; }
.label { height: 16px; flex: none; background: #c1d8f0; color: #3e6aaa; display: flex; justify-content: center; line-height: 17px; padding-right: 18px; position: relative; }
.launch { position: absolute; right: 6px; top: 4px; width: 6px; height: 6px; border: 1px solid #6d8fbf; border-right-color: transparent; border-bottom-color: transparent; }
.launch::after { content: ""; position: absolute; left: 2px; top: 2px; width: 4px; height: 4px; background: #587aaf; outline: 1px solid #e8f0fa; }
.clip { width: 151px; }
.font { width: 262px; }
.para { width: 209px; }
.styles { width: 506px; }
.editing { width: 75px; }
.editing .label { padding-right: 0; }
.tri { display: inline-block; width: 0; height: 0; border: 3px solid transparent; border-top-color: #5b7fb5; border-bottom: 0; }
.paste { width: 46px; display: flex; flex-direction: column; align-items: center; padding-top: 3px; }
.paste svg { margin-left: 4px; }
.cmd { margin-top: 3px; line-height: 13px; height: 13px; }
.paste .tri { margin-top: 5px; }
.list { display: flex; flex-direction: column; padding: 1px 0 0 2px; }
.list .item { height: 22px; display: flex; align-items: center; }
.list .tri { margin-left: 5px; }
.clip .list { padding-left: 3px; }
.off { color: #8d8f94; }
.editing .list { padding-left: 6px; }
.rows { flex-direction: column; padding: 9px 0 0 3px; gap: 7px; }
.row { display: flex; height: 22px; }
.combo { height: 22px; border: 1px solid #abc1de; background: #eaf2fb; color: #000; display: flex; align-items: center; padding: 0 4px 0 2px; justify-content: space-between; }
.c1 { width: 137px; }
.c2 { width: 42px; border-left: 0; padding-left: 2px; }
.btns { border: 1px solid #8dafdd; border-radius: 2px; height: 22px; background: linear-gradient(#d6e4f4, #cfdff2 9px, #c0d4ee 10px, #d2e3f5); overflow: hidden; }
.g3 { margin-left: 3px; }
.g4 { margin-left: 3.500px; }
.btns text { font-family: "Liberation Serif", serif; fill: #222; }
.btns text[font-family], .btns [font-family] text { font-family: "Noto Sans", sans-serif; }
.btns text.bl { fill: #24509c; }
.btns text.rd { fill: #a02c2c; }
.btns text.slate { fill: #4468a8; }
.gallery { margin: 4px 0 0 4px; width: 450px; height: 60px; border: 1px solid #b1cbe9; background: #d4e5f7; display: flex; }
.cell { width: 72px; height: 56px; padding: 5px 4px 4px; flex: none; }
.cell.sel { border: 2px solid #e8a22e; border-top-color: #b98748; border-bottom-color: #f6c73a; background: #fbd78f; padding: 3px 2px; }
.card { width: 64px; height: 48px; background: #fff; color: #000; overflow: hidden; text-align: center; }
.sample { height: 30px; padding: 6px 0 0; margin-left: 3px; text-align: left; line-height: 20px; overflow: hidden; width: 58px; white-space: nowrap; }
.plain { font: 12.500px/20px Lato, sans-serif; }
.h1, .h2, .h3, .h4 { font-family: "DejaVu Serif Condensed", "DejaVu Serif", serif; font-weight: bold; color: #4f81bd; font-size: 14px; }
.h1 { color: #365f91; font-size: 16px; }
.h3, .h4 { font-size: 13px; }
.h4 { font-style: italic; }
.sname { line-height: 18px; color: #0b0b50; }
.gscroll { margin-left: auto; width: 15px; display: flex; flex-direction: column; }
.gs { flex: 1; border: 1px solid #a9c4e6; background: #d2e3f7; display: flex; align-items: center; justify-content: center; }
.dis { background: #e2e5ea; border-color: #c8ccd3; }
.up { width: 0; height: 0; border: 3px solid transparent; border-bottom-color: #a5a9b0; border-top: 0; }
.more .tri { margin-top: 3px; position: relative; }
.more .tri::before { content: ""; position: absolute; left: -3px; top: -6px; width: 6px; height: 1px; background: #5b7fb5; }
.change { width: 48px; display: flex; flex-direction: column; align-items: center; padding-top: 3px; }
.change .cmd { margin-top: 4px; }
.cmd2 { display: flex; align-items: center; gap: 4px; line-height: 13px; }
.work { height: 830px; flex: none; display: flex; background: #9ab9e1; }
.left { width: 24px; flex: none; }
.tabsel { width: 25px; height: 23px; margin: 1px 0; border: 1px solid #5c86cc; background: #aac5ec; padding: 3px 5px; }
.rn { font: 9.500px "DejaVu Sans Condensed", sans-serif; fill: #46536a; }
.center { width: 1239px; flex: none; }
.hruler { margin-left: 264px; }
.desk { height: 805px; display: flex; background: linear-gradient(#9dbde7, #83a4d2 170px, #668dbf 370px, #557db1 535px, #557db1 570px, #668fcc 790px, #6791ce); overflow: hidden; }
.swoosh { margin-right: -1px; }
.page { width: 713px; height: 805px; background: #fff; border: solid #000; border-width: 0 1px; box-shadow: 3px 2px 7px 2px rgba(20,40,80,.6); overflow: hidden; clip-path: inset(0 -12px 0 -6px); font-family: Lato, sans-serif; color: #000; padding-left: 86px; flex: none; }
.phead { display: flex; justify-content: space-between; width: 539px; margin-top: 13px; height: 16px; line-height: 16px; font-size: 12px; color: #7f7f7f; }
.shots { display: flex; margin: 12px 0 0 -35px; height: 160px; align-items: flex-start; }
.s2 { margin: 55px 0 0 11px; }
.shots text { font-family: "Liberation Sans", sans-serif; }
.shots text.nar { font-family: "DejaVu Sans Condensed", sans-serif; }
.blue { fill: #0a0ad8; }
.blue2 { fill: #3a3ae6; }
.red { fill: #f03a3a; }
h2 { margin: 535px 0 0; font: bold 15.500px/24px "DejaVu Serif Condensed", "DejaVu Serif", serif; color: #365f91; height: 25px; }
p { margin: 0; height: 18px; line-height: 18px; font-size: 12px; }
.right { width: 17px; }
.status { height: 22px; flex: none; display: flex; color: #15295e; background: linear-gradient(#5e89c5 1px, #dbe9fb 1px, #c4dbf8 8px, #b3d0f6 9px, #cfe3fb 20px, #8fb1de); line-height: 22px; }
.st { display: flex; align-items: center; border-right: 1px solid #8eb4e6; box-shadow: 1px 0 #eaf3fe; height: 22px; flex: none; padding-left: 8px; }
.s-page { width: 90px; }
.s-words { width: 91px; }
.s-lang { width: 117px; padding-left: 7px; gap: 15px; }
.stright { margin-left: auto; }
.pct { font-family: "Noto Sans", sans-serif; fill: #15295e; }
.taskbar { height: 30px; flex: none; display: flex; align-items: flex-start; background: linear-gradient(#6e6e88 1px, #f2f2f6 1px, #fdfdfe 3px, #a3a3b7 4px, #b4b4c6 8px, #dcdce6 27px, #7f7f98); font: 11px/20px "DejaVu Sans Condensed", "DejaVu Sans", sans-serif; color: #333; }
.start { width: 98px; height: 29px; margin: 1px 9px 0 0; border-radius: 0 9px 12px 0; background: linear-gradient(#2f7d2b, #8fd184 3px, #4fa247 7px, #37912f 18px, #46a23d 24px, #206b1c); display: flex; padding: 4px 0 0 10px; box-shadow: inset -3px 0 4px #1d6a1d, 1px 0 2px #556; color: #fff; }
.start span { font: italic bold 16.500px/20px "Open Sans", sans-serif; margin-left: 4px; text-shadow: 1px 1px 1px #174d15; }
.task { width: 159px; height: 25px; margin: 3px 1px 0 0; border: 1px solid #8b8ba3; border-radius: 2px; background: linear-gradient(#fff 1px, #f1f1f5 3px, #dadae3 12px, #c5c5d3 20px, #e9e9f0); display: flex; padding: 3px 0 0 8px; box-shadow: inset 1px 1px #fff; flex: none; }
.task span { margin-left: 3px; line-height: 17px; }
.task.on { background: linear-gradient(#5b6470, #66717d 6px, #6f7b88); color: #fff; border-color: #444e5a; box-shadow: none; padding-left: 10px; }
.task.on span { line-height: 19px; margin-left: 2px; }
.tray { margin-left: auto; width: 182px; height: 29px; margin-top: 1px; border-left: 1px solid #777790; background: linear-gradient(#fff 1px, #e8e8ee 5px, #d2d2dc 22px, #bdbdca); display: flex; align-items: center; padding: 0 0 2px 13px; color: #000; }
.tray span { margin-left: -1px; }
.window { position: absolute; left: 314px; top: 336px; width: 757px; height: 464px; border: 1px solid #66667f; border-radius: 7px 7px 0 0; background: #e8e8f0; padding: 0 2px 2px; box-shadow: inset 0 0 0 1px #fff; }
.wtitle { height: 28px; display: flex; margin: 0 -2px; padding: 5px 5px 0 6px; border-radius: 6px 6px 0 0; background: linear-gradient(#d8d8e4, #fff 2px, #c5c5d6 4px, #a8a8c0 7px, #b4b4c9 12px, #e2e2ea 20px, #fff 26px); }
.wtitle > svg { margin-top: 4px; }
.wt { font: bold 12.500px/20px "Noto Sans", sans-serif; color: #111; margin: 1px auto 0 4px; text-shadow: 1px 1px #bfbfd0; }
.wb { width: 21px; height: 21px; border: 1px solid #64648a; border-radius: 3px; margin-left: 2px; background: linear-gradient(135deg, #f0f0f6, #bcbcd2 60%, #9d9dbb); box-shadow: inset 0 0 0 1px rgba(255,255,255,.55); }
.close { background: linear-gradient(135deg, #f09a90, #d9605c 50%, #b83c44); border-color: #a04048; }
.client { height: 432px; border: 1px solid #7a7a94; background: #e0dfe3; display: flex; }
.main { width: 625px; flex: none; padding: 8px 0 0 8px; height: 430px; }
.banner { width: 729px; height: 104px; background: #80ff80; padding-top: 12px; }
.frame { height: 92px; border: 1px solid #8c8c8c; border-right-color: #fff; box-shadow: inset 1px 1px #fff, inset -1px 0 #8c8c8c, 0 1px #fff; padding: 3px 0 0 15px; display: flex; flex-direction: column; align-items: flex-start; font: 19px/24px "Liberation Sans", sans-serif; color: #00f; -webkit-text-stroke: .2px #00f; }
.brow { display: flex; padding-left: 16px; gap: 31px; height: 57px; margin-top: 23px; }
.r0 { margin-top: 32px; }
.r1 { padding-left: 120px; gap: 39px; }
.vb { width: 177px; height: 57px; flex: none; padding: 0 0 1px; margin: 0; background: #e0dfe3; border: 1px solid; border-color: #fff #6f6f66 #6f6f66 #fff; box-shadow: inset 1px 1px #f1efe6, inset -1px -1px #a2a29e; font: 12px/13px "Liberation Sans", sans-serif; color: #000; display: flex; flex-direction: column; align-items: center; justify-content: center; }
.wide { width: 185px; }
.focus { border-color: #200; box-shadow: inset 1px 1px #fff, inset 2px 2px #f3f1ea, inset -1px -1px #6f6f66, inset -2px -2px #a2a29e; outline: 1px dotted #000; outline-offset: -5px; padding-top: 1px; }
.side { width: 121px; height: 321px; margin: 104px 0 0 -1px; background: #80ff80; padding-top: 6px; position: relative; }
.sideframe { height: 315px; border: 1px solid #8c8c8c; box-shadow: inset 1px 1px #fff; display: flex; flex-direction: column; padding: 153px 0 0 7px; gap: 23px; }
.redb { width: 105px; background: #f00; box-shadow: inset 1px 1px #fff, inset -1px -1px #a2a29e; }
</style>
